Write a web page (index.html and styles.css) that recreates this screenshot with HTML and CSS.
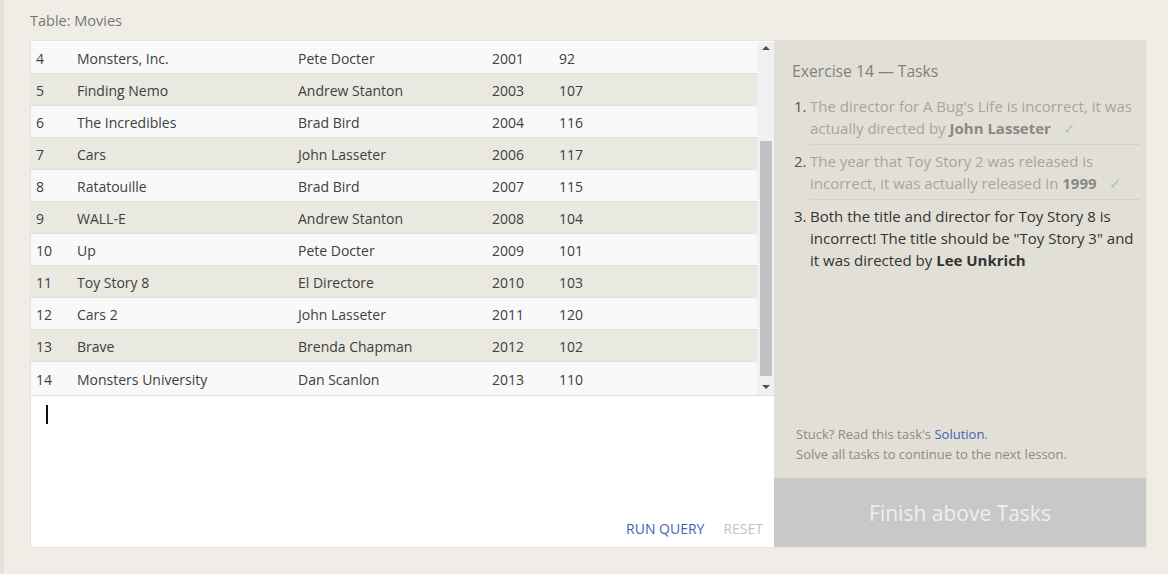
FILE: index.html
```html
<!DOCTYPE html>
<html>
<head>
<meta charset="utf-8">
<link rel="stylesheet" href="styles.css">
</head>
<body>
<div class="page">
  <div class="caption">Table: Movies</div>
  <div class="panel">
    <div class="left">
      <div class="results">
        <div class="rows">
          <div class="row"><span class="c-id">4</span><span class="c-title">Monsters, Inc.</span><span class="c-dir">Pete Docter</span><span class="c-year">2001</span><span class="c-len">92</span></div>
          <div class="row alt"><span class="c-id">5</span><span class="c-title">Finding Nemo</span><span class="c-dir">Andrew Stanton</span><span class="c-year">2003</span><span class="c-len">107</span></div>
          <div class="row"><span class="c-id">6</span><span class="c-title">The Incredibles</span><span class="c-dir">Brad Bird</span><span class="c-year">2004</span><span class="c-len">116</span></div>
          <div class="row alt"><span class="c-id">7</span><span class="c-title">Cars</span><span class="c-dir">John Lasseter</span><span class="c-year">2006</span><span class="c-len">117</span></div>
          <div class="row"><span class="c-id">8</span><span class="c-title">Ratatouille</span><span class="c-dir">Brad Bird</span><span class="c-year">2007</span><span class="c-len">115</span></div>
          <div class="row alt"><span class="c-id">9</span><span class="c-title">WALL-E</span><span class="c-dir">Andrew Stanton</span><span class="c-year">2008</span><span class="c-len">104</span></div>
          <div class="row"><span class="c-id">10</span><span class="c-title">Up</span><span class="c-dir">Pete Docter</span><span class="c-year">2009</span><span class="c-len">101</span></div>
          <div class="row alt"><span class="c-id">11</span><span class="c-title">Toy Story 8</span><span class="c-dir">El Directore</span><span class="c-year">2010</span><span class="c-len">103</span></div>
          <div class="row"><span class="c-id">12</span><span class="c-title">Cars 2</span><span class="c-dir">John Lasseter</span><span class="c-year">2011</span><span class="c-len">120</span></div>
          <div class="row alt"><span class="c-id">13</span><span class="c-title">Brave</span><span class="c-dir">Brenda Chapman</span><span class="c-year">2012</span><span class="c-len">102</span></div>
          <div class="row"><span class="c-id">14</span><span class="c-title">Monsters University</span><span class="c-dir">Dan Scanlon</span><span class="c-year">2013</span><span class="c-len">110</span></div>
        </div>
        <div class="scrollbar">
          <div class="arrow up"></div>
          <div class="track"><div class="thumb"></div></div>
          <div class="arrow down"></div>
        </div>
      </div>
      <div class="editor">
        <div class="cursor"></div>
        <div class="actions">
          <span class="run">RUN QUERY</span>
          <span class="reset">RESET</span>
        </div>
      </div>
    </div>
    <div class="right">
      <div class="tasks">
        <div class="tasks-title">Exercise 14 — Tasks</div>
        <ol class="task-list">
          <li class="done"><span class="num">1.</span><span class="txt">The director for A Bug's Life is incorrect, it was actually directed by <b>John Lasseter</b><span class="check">✓</span></span></li>
          <li class="done"><span class="num">2.</span><span class="txt">The year that Toy Story 2 was released is incorrect, it was actually released in <b>1999</b><span class="check">✓</span></span></li>
          <li><span class="num">3.</span><span class="txt">Both the title and director for Toy Story 8 is incorrect! The title should be "Toy Story 3" and it was directed by <b>Lee Unkrich</b></span></li>
        </ol>
        <div class="help">
          <div>Stuck? Read this task's <span class="link">Solution</span>.</div>
          <div>Solve all tasks to continue to the next lesson.</div>
        </div>
      </div>
      <div class="finish">Finish above Tasks</div>
    </div>
  </div>
</div>
</body>
</html>
```

FILE: styles.css
```css
html, body {
  margin: 0;
  padding: 0;
}
body {
  background: #efede6;
  font-family: "Open Sans", "Noto Sans", sans-serif;
  color: #444;
  height: 574px;
  overflow: hidden;
}
.page {
  border-left: 4px solid #e4e2db;
  height: 574px;
  padding-left: 26px;
  box-sizing: border-box;
}
.caption {
  font-size: 14.5px;
  color: #777;
  padding-top: 11px;
  height: 40px;
  line-height: 20px;
  box-sizing: border-box;
}
.panel {
  display: flex;
  width: 1117px;
  height: 508px;
  border: 1px solid #e5e3dc;
  box-sizing: border-box;
  background: #e5e3dc;
}
.left {
  width: 743px;
  display: flex;
  flex-direction: column;
  background: #fff;
  padding-top: 1px;
  box-sizing: border-box;
}
.results {
  display: flex;
  height: 353px;
  border-bottom: 1px solid #e3e1da;
}
.rows {
  width: 726px;
}
.row {
  display: flex;
  height: 32px;
  align-items: center;
  padding-top: 2px;
  background: #f9f9f9;
  border-bottom: 1px solid #e2e0d9;
  box-sizing: border-box;
  font-size: 14px;
  color: #404040;
}
.row.alt {
  background: #e9e8e1;
}
.row:last-child {
  border-bottom: none;
  height: 33px;
}
.c-id { width: 46px; padding-left: 5px; box-sizing: border-box; }
.c-title { width: 221px; }
.c-dir { width: 194px; }
.c-year { width: 67px; }
.c-len { width: 60px; }

.scrollbar {
  width: 17px;
  background: #f1f1f1;
  display: flex;
  flex-direction: column;
  align-items: center;
}
.arrow {
  width: 0;
  height: 0;
  border-left: 4px solid transparent;
  border-right: 4px solid transparent;
}
.arrow.up {
  border-bottom: 4px solid #505050;
  margin-top: 4px;
}
.arrow.down {
  border-top: 4px solid #505050;
  margin-bottom: 6px;
}
.track {
  flex: 1;
  width: 100%;
  display: flex;
  justify-content: center;
}
.thumb {
  width: 12px;
  margin-top: 91px;
  height: 235px;
  background: #c1c1c1;
}
.editor {
  flex: 1;
  display: flex;
  flex-direction: column;
  justify-content: space-between;
}
.cursor {
  width: 2px;
  height: 19px;
  background: #111;
  margin-top: 9px;
  margin-left: 15px;
}
.actions {
  display: flex;
  justify-content: flex-end;
  gap: 19px;
  padding-right: 11px;
  padding-bottom: 8px;
  font-size: 14px;
  line-height: 20px;
}
.run { color: #3e64b5; }
.reset { color: #c4c4c4; }

.right {
  width: 372px;
  display: flex;
  flex-direction: column;
  background: #e2e0d6;
}
.tasks {
  flex: 1;
  display: flex;
  flex-direction: column;
  padding: 19px 6px 14px 17px;
}
.tasks-title {
  font-size: 15.7px;
  color: #808080;
  line-height: 22px;
  padding-left: 1px;
}
.task-list {
  list-style: none;
  margin: 13px 0 0 0;
  padding: 0;
  font-size: 15px;
  line-height: 22px;
}
.task-list li {
  display: flex;
  color: #333;
}
.task-list li + li .txt {
  border-top: 1px solid #d3d1c7;
}
.task-list .num {
  width: 19px;
  flex: none;
  padding-left: 3px;
  box-sizing: border-box;
}
.task-list li + li .num { padding-top: 6px; }
.task-list .txt {
  flex: 1;
  padding-bottom: 5px;
}
.task-list li + li .txt { padding-top: 5px; }
.task-list li.done .txt { color: #a5a5a0; }
.task-list li.done b { color: #888; }
.task-list li.done .num { color: #555; }
.task-list b { color: #333; }
.check {
  color: #9bd39b;
  margin-left: 12px;
}
.help {
  margin-top: auto;
  font-size: 13px;
  line-height: 20px;
  color: #8a8a8a;
  padding-left: 5px;
}
.link { color: #3e64b5; }
.finish {
  height: 69px;
  background: #c8c8c8;
  color: #efefef;
  font-size: 21px;
  display: flex;
  align-items: center;
  justify-content: center;
}
```
